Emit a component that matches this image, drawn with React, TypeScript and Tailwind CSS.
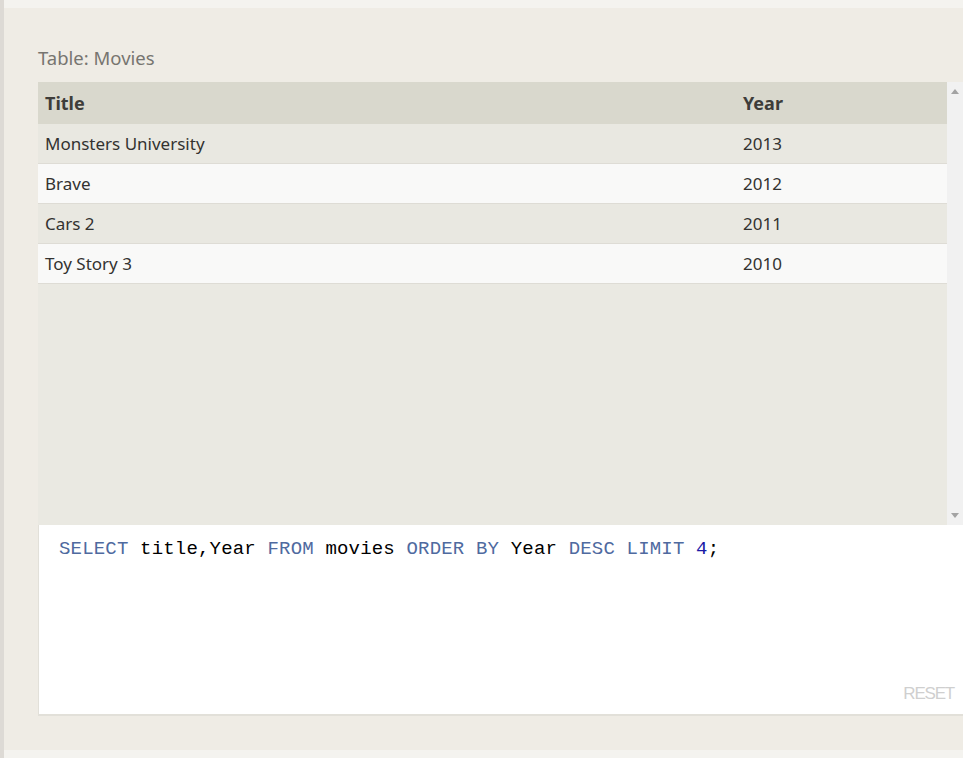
import React from "react";

interface Movie {
  title: string;
  year: number;
}

const movies: Movie[] = [
  { title: "Monsters University", year: 2013 },
  { title: "Brave", year: 2012 },
  { title: "Cars 2", year: 2011 },
  { title: "Toy Story 3", year: 2010 },
];

const kw = "text-[#4f6a9f]";

const App: React.FC = () => {
  return (
    <div className="flex h-[758px] w-[963px] overflow-hidden bg-[#f4f3ef] font-['Noto_Sans','Open_Sans',sans-serif]">
      <div className="w-[4px] shrink-0 bg-[#dddad5]" />
      <div className="flex min-w-0 flex-1 flex-col">
        <div className="h-[8px] shrink-0 bg-[#f4f3ef]" />
        <div className="flex h-[742px] flex-col bg-[#efece5] pl-[34px]">
          <div className="mt-[37px] h-[37px] text-[18.5px] leading-[26px] text-[#777570]">
            Table: Movies
          </div>
          {/* result table */}
          <div className="flex h-[443px] bg-[#eae9e2]">
            <div className="flex-1">
              <div className="flex h-[42px] items-center bg-[#d9d8cd] text-[18px] font-bold text-[#3e3d3a]">
                <div className="flex-1 pl-[7px]">Title</div>
                <div className="w-[204px]">Year</div>
              </div>
              {movies.map((m, i) => (
                <div
                  key={m.title}
                  className={`flex h-[40px] items-center border-b border-[#dedcd5] text-[17px] text-[#333230] ${
                    i % 2 === 0 ? "bg-[#e9e8e1]" : "bg-[#f9f9f8]"
                  }`}
                >
                  <div className="flex-1 pl-[7px]">{m.title}</div>
                  <div className="w-[204px]">{m.year}</div>
                </div>
              ))}
            </div>
            <div className="flex w-[16px] flex-col items-center justify-between bg-[#f1f1f1] py-[7px]">
              <div className="h-0 w-0 border-x-[4px] border-b-[5px] border-x-transparent border-b-[#a3a3a3]" />
              <div className="h-0 w-0 border-x-[4px] border-t-[5px] border-x-transparent border-t-[#a3a3a3]" />
            </div>
          </div>
          {/* editor */}
          <div className="flex h-[191px] flex-col justify-between border-b-2 border-l border-[#e2e0d9] bg-white">
            <div className="pl-[20px] pt-[13px] font-['Liberation_Mono',monospace] text-[19px] leading-[22px] tracking-[0.18px] whitespace-pre text-black">
              <span className={kw}>SELECT</span> title,Year <span className={kw}>FROM</span> movies{" "}
              <span className={kw}>ORDER BY</span> Year <span className={kw}>DESC</span>{" "}
              <span className={kw}>LIMIT</span> <span className="text-[#1a1aa6]">4</span>;
            </div>
            <div className="self-end pb-[8px] pr-[9px] font-['Liberation_Sans',sans-serif] text-[17px] tracking-[-1.2px] text-[#cfcfcf]">
              RESET
            </div>
          </div>
        </div>
        <div className="flex-1 bg-[#f4f3ef]" />
      </div>
    </div>
  );
};

export default App;
